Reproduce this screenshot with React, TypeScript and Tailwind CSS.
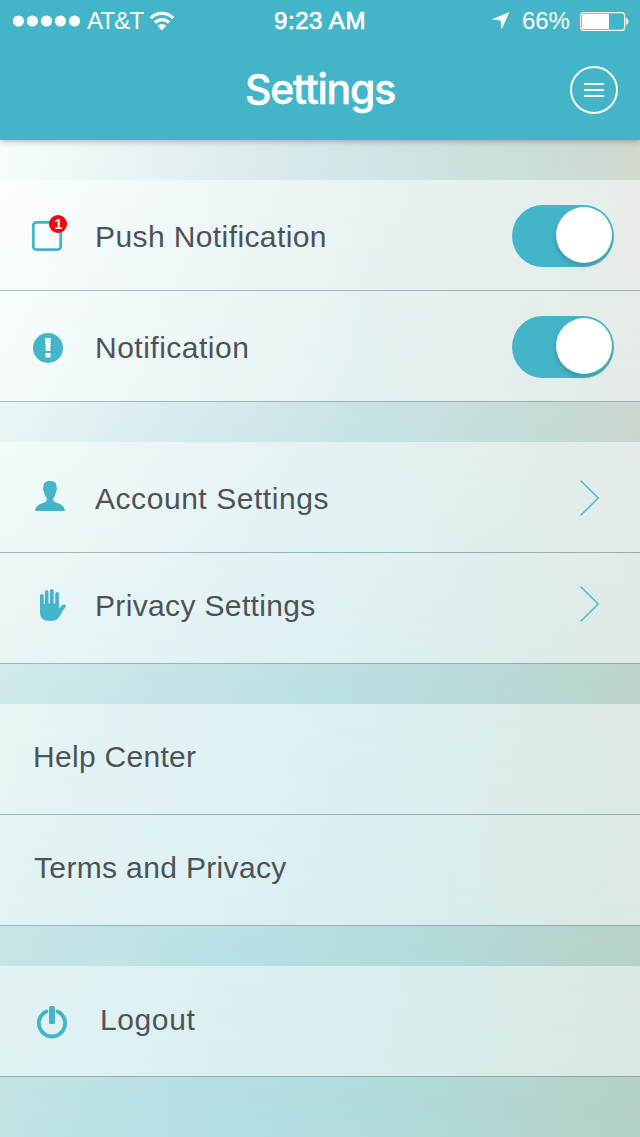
import type { ReactNode } from "react";

const TEAL = "#44b5c8";

function StatusBar() {
  return (
    <div className="grid h-10 grid-cols-[1fr_auto_1fr] items-center text-[24px] leading-10">
      <div className="flex items-center pl-[12px]">
        <svg width="69" height="14" viewBox="0 0 69 14" fill="white">
          <circle cx="6.4" cy="7" r="5.6" />
          <circle cx="20.4" cy="7" r="5.6" />
          <circle cx="34.5" cy="7" r="5.6" />
          <circle cx="48.5" cy="7" r="5.6" />
          <circle cx="62.5" cy="7" r="5.6" />
        </svg>
        <span className="ml-[6px] w-[62px] pt-px tracking-[-0.8px]">AT&amp;T</span>
        <svg width="26" height="20" viewBox="0 0 26 20" fill="none" stroke="white" strokeWidth="3.3">
          <path d="M1.800 7.100a15.800 15.800 0 0 1 22.400 0" />
          <path d="M5.900 11.700a9.900 9.900 0 0 1 14.200 0" />
          <path d="M8.600 14.800a6 6 0 0 1 8.800 0L13 19.200z" fill="white" stroke="none" />
        </svg>
      </div>
      <div className="pt-px tracking-[0.55px] [-webkit-text-stroke:0.7px_white]">9:23 AM</div>
      <div className="flex items-center justify-end pr-[11px]">
        <svg width="19" height="18" viewBox="0 0 19 18" fill="white">
          <path d="M18.5 0 10.6 17.6 9.6 8.5 0.5 7.6z" />
        </svg>
        <span className="ml-[12px] w-[57px] pt-px tracking-[-0.1px]">66%</span>
        <svg width="50" height="20" viewBox="0 0 50 20">
          <rect x="1.6" y="1.6" width="44" height="17.8" rx="3" fill="none" stroke="white" strokeWidth="1.2" />
          <rect x="3" y="3" width="27" height="15" rx="1" fill="white" />
          <path d="M47 7v7c1.600-.6 2.400-2 2.400-3.500S48.600 7.600 47 7z" fill="white" />
        </svg>
      </div>
    </div>
  );
}

function Header() {
  return (
    <header className="relative h-[140px] bg-[#44b5c8] text-white shadow-[0_1px_6px_rgba(60,80,80,0.45)]">
      <StatusBar />
      <div className="grid h-[100px] grid-cols-[1fr_auto_1fr] items-center">
        <h1 className="col-start-2 pb-[2px] font-['Inter'] text-[41px] leading-[98px] font-medium tracking-[-1.2px] [-webkit-text-stroke:0.5px_white]">
          Settings
        </h1>
        <button aria-label="Menu" className="mr-[22px] justify-self-end">
          <svg width="48" height="48" viewBox="0 0 48 48" fill="none" stroke="white" strokeWidth="2">
            <circle cx="24" cy="24" r="23" />
            <path d="M14 18h20M14 24h20M14 30h20" />
          </svg>
        </button>
      </div>
    </header>
  );
}

function Toggle() {
  return (
    <button
      role="switch"
      aria-checked="true"
      className="mt-[25px] mr-[26px] flex h-[62px] w-[102px] justify-end rounded-full bg-[#44b5c8] pt-[2px] pr-[2px]"
    >
      <span className="size-[56px] rounded-full bg-white shadow-[-1px_3px_4px_rgba(40,90,100,0.3)]" />
    </button>
  );
}

function Chevron({ className }: { className: string }) {
  return (
    <svg className={className} width="22" height="38" viewBox="0 0 22 38" fill="none" stroke="#4dbac9" strokeWidth="1.5">
      <path d="M1.500 1.500 19.200 19 1.500 36.500" />
    </svg>
  );
}

function Icon({ children }: { children: ReactNode }) {
  return (
    <svg className="mt-[35px] ml-[30px] shrink-0" width="40" height="40" viewBox="0 0 40 40" fill={TEAL}>
      {children}
    </svg>
  );
}

function PushIcon() {
  return (
    <Icon>
      <rect x="3.300" y="7.300" width="27.400" height="27.400" rx="3.200" fill="none" stroke={TEAL} strokeWidth="2.800" />
      <circle cx="28" cy="9" r="9" fill="#f8000c" />
      <text x="28.300" y="13.900" textAnchor="middle" fill="white" fontSize="14" fontWeight="700">
        1
      </text>
    </Icon>
  );
}

function AlertIcon() {
  return (
    <Icon>
      <circle cx="18" cy="22" r="15" />
      <path d="M15.200 12h5.600l-.5 13h-4.600zM15.500 27h5v4.500h-5z" fill="white" />
    </Icon>
  );
}

function PersonIcon() {
  return (
    <Icon>
      <path d="M20 4c-4.500 0-6.600 2-6.600 6 0 .8-.4 1.300-.3 2.300.1 1.200.4 2 1 2.600.3 2.600 1.200 4.600 2.600 6.100 0 1.400 0 2.600-.6 3.600-1 .9-3.600 1.300-5.900 2.400C7.100 28.500 5.500 30.700 5 34h30c-.5-3.300-2.100-5.500-5.200-7-2.300-1.100-4.900-1.500-5.900-2.400-.6-1-.6-2.200-.6-3.600 1.400-1.500 2.300-3.500 2.600-6.100.6-.6.900-1.400 1-2.600.1-1-.3-1.500-.3-2.300 0-4-2.100-6-6.600-6z" />
    </Icon>
  );
}

function HandIcon() {
  return (
    <Icon>
      <path d="M10 7.800a1.850 1.850 0 0 1 3.700 0V16h1.200V3.800a1.800 1.800 0 0 1 3.600 0V15.500h1.500V2.800a1.850 1.850 0 0 1 3.700 0V15.500h1.500V5.800a1.850 1.850 0 0 1 3.700 0V20.500l3.300-3.300c1.700-1.600 4.200-.6 3.700 1.100-.3 1.100-1.300 1.600-2 2.800l-4 6.800C27.700 31.500 25 33 21 33h-1.500C13.500 33 10 30 10 24.500z" />
    </Icon>
  );
}

function PowerIcon() {
  return (
    <Icon>
      <path d="M16.300 10.500a13.100 13.100 0 1 0 11.400 0" fill="none" stroke={TEAL} strokeWidth="4" strokeLinecap="round" />
      <rect x="19" y="5" width="6" height="18" rx="1.500" />
    </Icon>
  );
}

function Row({ icon, label, labelClass, action }: { icon?: ReactNode; label: string; labelClass: string; action?: ReactNode }) {
  return (
    <li className="flex h-[111px] items-start border-b border-[#668689]/50 bg-white/50 bg-clip-padding">
      {icon}
      <span className={`grow text-[30px] leading-[34px] text-[#4d5354] ${labelClass}`}>{label}</span>
      {action}
    </li>
  );
}

export default function App() {
  return (
    <div className="relative isolate flex h-[1137px] w-[640px] flex-col overflow-hidden bg-[linear-gradient(98deg,#c9e6e3_0%,#b4dfe5_48%,#b1dad9_72%,#b4d0c6_100%)] font-['Liberation_Sans',Arial,sans-serif]">
      <div className="absolute inset-0 -z-10 bg-[linear-gradient(95deg,#f6fcfc_3%,#e3eff1_27%,#d0e5e5_53%,#cbddd8_76%,#d8d4c5_100%)] [mask-image:linear-gradient(to_bottom,black_160px,rgba(0,0,0,0.75)_420px,rgba(0,0,0,0.28)_680px,transparent_1137px)]" />
      <Header />
      <main className="flex flex-col gap-10 pt-10">
        <ul>
          <Row icon={<PushIcon />} label="Push Notification" labelClass="mt-[40px] ml-[25px] tracking-[0.4px]" action={<Toggle />} />
          <Row icon={<AlertIcon />} label="Notification" labelClass="mt-[40px] ml-[25px] tracking-[0.5px]" action={<Toggle />} />
        </ul>
        <ul>
          <Row
            icon={<PersonIcon />}
            label="Account Settings"
            labelClass="mt-[40px] ml-[25px] tracking-[0.55px]"
            action={<Chevron className="mt-[37px] mr-[39px]" />}
          />
          <Row
            icon={<HandIcon />}
            label="Privacy Settings"
            labelClass="mt-[36px] ml-[25px] tracking-[0.35px]"
            action={<Chevron className="mt-[32px] mr-[39px]" />}
          />
        </ul>
        <ul>
          <Row label="Help Center" labelClass="mt-[36px] ml-[33px] tracking-[0.3px]" />
          <Row label="Terms and Privacy" labelClass="mt-[36px] ml-[34px] tracking-[0.35px]" />
        </ul>
        <ul>
          <Row icon={<PowerIcon />} label="Logout" labelClass="mt-[37px] ml-[30px] tracking-[0.6px]" />
        </ul>
      </main>
    </div>
  );
}
